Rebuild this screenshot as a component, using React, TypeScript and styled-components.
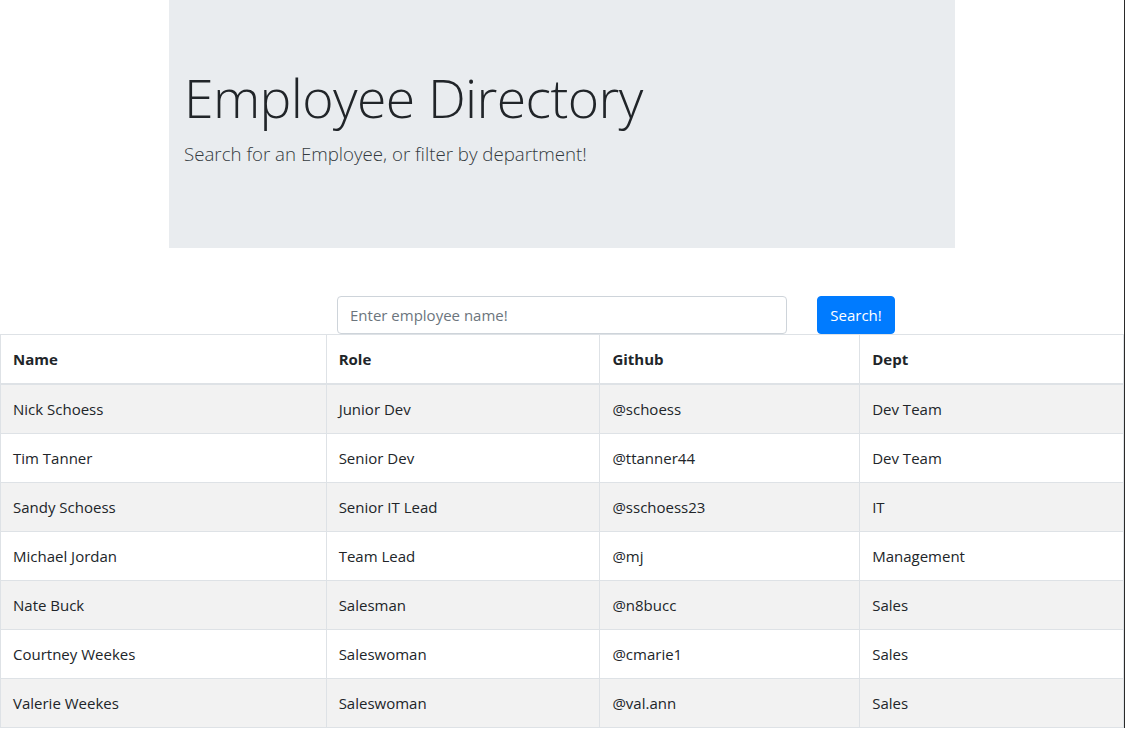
import React from 'react';
import styled, { createGlobalStyle } from 'styled-components';

const GlobalStyle = createGlobalStyle`
  * {
    box-sizing: border-box;
  }
  body {
    margin: 0;
    background: #fff;
    font-family: 'Open Sans', 'Noto Sans', sans-serif;
    font-size: 16px;
    line-height: 1.5;
    color: #212529;
  }
`;

const Page = styled.div`
  display: flex;
  flex-direction: column;
  width: 1125px;
  border-right: 1px solid #2a2a2a;
`;

const Jumbotron = styled.header`
  width: 786px;
  margin: 0 auto 48px;
  padding: 64px 15px 63px;
  background: #e9ecef;
`;

const Title = styled.h1`
  margin: 0 0 8px;
  font-size: 53.5px;
  font-weight: 300;
  line-height: 67px;
  letter-spacing: -0.6px;
  color: #212529;
`;

const Lead = styled.p`
  margin: 0 0 16px;
  font-size: 18.7px;
  font-weight: 300;
  line-height: 30px;
  color: #343a40;
`;

const SearchForm = styled.form`
  display: flex;
  gap: 30px;
  margin-left: 337px;
`;

const SearchInput = styled.input`
  width: 450px;
  height: 38px;
  padding: 6px 12px;
  font-family: inherit;
  font-size: 15px;
  color: #495057;
  border: 1px solid #ced4da;
  border-radius: 4px;
  outline: none;

  &::placeholder {
    color: #6c757d;
  }
`;

const SearchButton = styled.button`
  width: 78px;
  height: 38px;
  padding: 0;
  font-family: inherit;
  font-size: 15px;
  color: #fff;
  background: #007bff;
  border: 1px solid #007bff;
  border-radius: 4px;
`;

const Table = styled.table`
  width: 1124px;
  border-collapse: collapse;
  font-size: 15px;
`;

const HeadCell = styled.th<{ $width: number }>`
  width: ${p => p.$width}px;
  padding: 12px;
  text-align: left;
  font-weight: 700;
  line-height: 24px;
  border: 1px solid #dee2e6;
  border-bottom-width: 2px;
`;

const Row = styled.tr<{ $striped: boolean }>`
  background: ${p => (p.$striped ? '#f2f2f2' : '#fff')};
`;

const Cell = styled.td`
  padding: 12px;
  line-height: 24px;
  border: 1px solid #dee2e6;
`;

const columns = [
  { label: 'Name', width: 326 },
  { label: 'Role', width: 274 },
  { label: 'Github', width: 260 },
  { label: 'Dept', width: 264 },
];

const employees = [
  ['Nick Schoess', 'Junior Dev', '@schoess', 'Dev Team'],
  ['Tim Tanner', 'Senior Dev', '@ttanner44', 'Dev Team'],
  ['Sandy Schoess', 'Senior IT Lead', '@sschoess23', 'IT'],
  ['Michael Jordan', 'Team Lead', '@mj', 'Management'],
  ['Nate Buck', 'Salesman', '@n8bucc', 'Sales'],
  ['Courtney Weekes', 'Saleswoman', '@cmarie1', 'Sales'],
  ['Valerie Weekes', 'Saleswoman', '@val.ann', 'Sales'],
];

export default function App() {
  return (
    <>
      <GlobalStyle />
      <Page>
        <Jumbotron>
          <Title>Employee Directory</Title>
          <Lead>Search for an Employee, or filter by department!</Lead>
        </Jumbotron>
        <SearchForm onSubmit={e => e.preventDefault()}>
          <SearchInput placeholder="Enter employee name!" />
          <SearchButton type="submit">Search!</SearchButton>
        </SearchForm>
        <Table>
          <thead>
            <tr>
              {columns.map(c => (
                <HeadCell key={c.label} $width={c.width}>
                  {c.label}
                </HeadCell>
              ))}
            </tr>
          </thead>
          <tbody>
            {employees.map((emp, i) => (
              <Row key={emp[2]} $striped={i % 2 === 0}>
                {emp.map((v, j) => (
                  <Cell key={j}>{v}</Cell>
                ))}
              </Row>
            ))}
          </tbody>
        </Table>
      </Page>
    </>
  );
}
